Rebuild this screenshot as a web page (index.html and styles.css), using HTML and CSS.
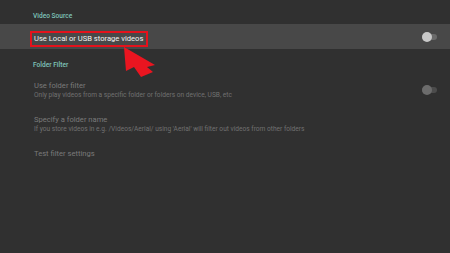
FILE: index.html
```html
<!DOCTYPE html>
<html lang="en">
<head>
    <meta charset="UTF-8">
    <meta name="viewport" content="width=device-width, initial-scale=1.0">
    <title>Video Source</title>
    <link rel="stylesheet" href="styles.css">
</head>
<body>
    <div class="screen">
        <div class="section-title">Video Source</div>

        <div class="row row-focused">
            <div class="row-text">
                <span class="title title-marked">Use Local or USB storage videos</span>
            </div>
            <span class="switch"><span class="knob"></span></span>
        </div>

        <div class="section-title">Folder Filter</div>

        <div class="row row-disabled">
            <div class="row-text">
                <div class="title">Use folder filter</div>
                <div class="summary">Only play videos from a specific folder or folders on device, USB, etc</div>
            </div>
            <span class="switch switch-disabled"><span class="knob"></span></span>
        </div>

        <div class="row row-disabled">
            <div class="row-text">
                <div class="title">Specify a folder name</div>
                <div class="summary">If you store videos in e.g. /Videos/Aerial/ using 'Aerial' will filter out videos from other folders</div>
            </div>
        </div>

        <div class="row row-disabled">
            <div class="row-text">
                <div class="title">Test filter settings</div>
            </div>
        </div>

        <!-- annotation arrow -->
        <svg class="pointer" width="450" height="253" viewBox="0 0 450 253">
            <polygon points="124,47 155,65 147,67 153,72 141,77 134,67 126,71" fill="#ea1520"/>
        </svg>
    </div>
</body>
</html>
```

FILE: styles.css
```css
body {
    margin: 0;
    padding: 0;
    background-color: #303030;
    font-family: Roboto, "Liberation Sans", sans-serif;
}
.screen {
    position: relative;
    width: 450px;
    height: 253px;
    overflow: hidden;
}
.section-title {
    padding: 8px 0 0 33px;
    height: 16px;
    line-height: 16px;
    font-size: 6.6px;
    font-weight: 500;
    color: #7fc4ba;
}
.row {
    display: flex;
    align-items: center;
    justify-content: space-between;
    padding: 8px 13px 8px 34px;
}
.row-focused {
    height: 25px;
    padding-top: 0;
    padding-bottom: 0;
    background-color: #484848;
}
.title {
    display: block;
    line-height: 10px;
    font-size: 7.6px;
    color: #f2f2f2;
}
.title-marked {
    display: inline-block;
    margin-left: -4px;
    padding: 1px 3px 0 2px;
    height: 11px;
    border: 2px solid #e4121c;
}
.summary {
    line-height: 8px;
    font-size: 6.6px;
    color: #707070;
}
.row-disabled .title {
    color: #7a7a7a;
}
.switch {
    position: relative;
    display: block;
    width: 15px;
    height: 6px;
    border-radius: 3px;
    background-color: #6a6a6a;
}
.knob {
    position: absolute;
    left: 0;
    top: -2px;
    width: 10px;
    height: 10px;
    border-radius: 50%;
    background-color: #c9c9c9;
}
.switch-disabled {
    background-color: #4c4c4c;
}
.switch-disabled .knob {
    background-color: #6c6c6c;
}
.pointer {
    position: absolute;
    left: 0;
    top: 0;
}
```
